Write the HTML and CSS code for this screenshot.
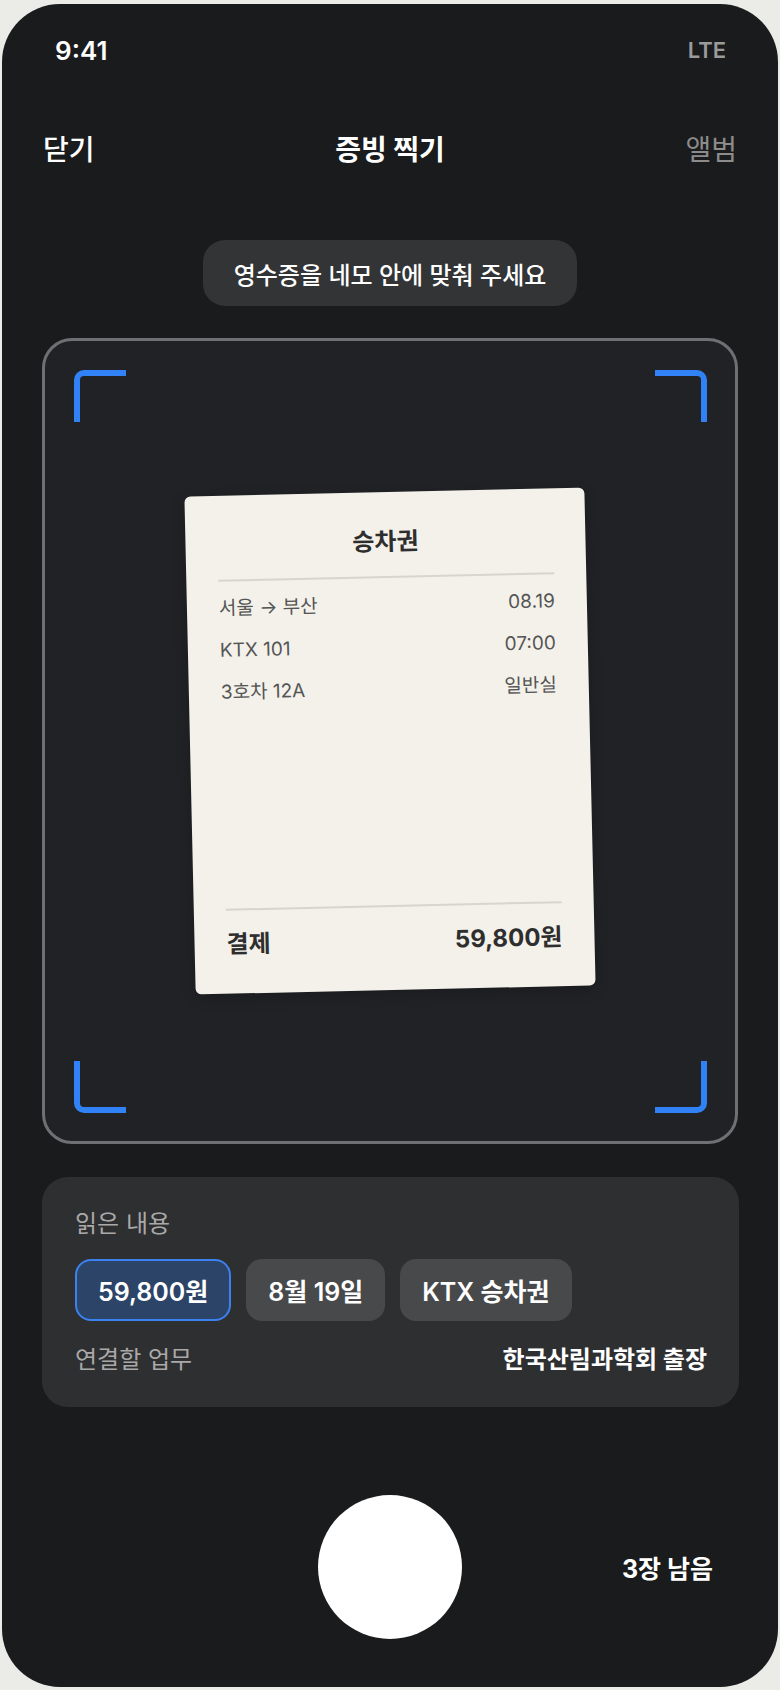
FILE: index.html
```html
<!DOCTYPE html>
<html lang="ko">
<head>
    <meta charset="UTF-8">
    <title>증빙 찍기</title>
    <link rel="stylesheet" href="styles.css">
</head>
<body>
    <div class="phone">
        <div class="status">
            <span class="time">9:41</span>
            <span class="net">LTE</span>
        </div>

        <div class="header">
            <span class="close">닫기</span>
            <span class="title">증빙 찍기</span>
            <span class="album">앨범</span>
        </div>

        <div class="toast">영수증을 네모 안에 맞춰 주세요</div>

        <div class="scan">
            <span class="corner tl"></span>
            <span class="corner tr"></span>
            <span class="corner bl"></span>
            <span class="corner br"></span>

            <div class="receipt">
                <div class="receipt-title">승차권</div>
                <div class="rule"></div>
                <div class="line"><span>서울 → 부산</span><span>08.19</span></div>
                <div class="line"><span>KTX 101</span><span>07:00</span></div>
                <div class="line"><span>3호차 12A</span><span>일반실</span></div>
                <div class="spacer"></div>
                <div class="rule"></div>
                <div class="total"><span>결제</span><span>59,800원</span></div>
            </div>
        </div>

        <div class="read-card">
            <div class="label">읽은 내용</div>
            <div class="chips">
                <span class="chip active">59,800원</span>
                <span class="chip">8월 19일</span>
                <span class="chip">KTX 승차권</span>
            </div>
            <div class="link-row">
                <span class="label">연결할 업무</span>
                <span class="task">한국산림과학회 출장</span>
            </div>
        </div>

        <div class="bottom">
            <div></div>
            <button class="shutter" aria-label="촬영"></button>
            <span class="left-count">3장 남음</span>
        </div>
    </div>
</body>
</html>
```

FILE: styles.css
```css
body {
    margin: 0;
    padding: 4px 2px 3px;
    background: #ebebe7;
    font-family: 'Inter', 'Noto Sans CJK KR', sans-serif;
    color: #fff;
}

.phone {
    height: 1683px;
    border-radius: 58px;
    background: #1a1b1d;
    display: flex;
    flex-direction: column;
    overflow: hidden;
}

.status {
    height: 92px;
    display: flex;
    justify-content: space-between;
    align-items: center;
    padding: 0 52px 0 53px;
}

.time {
    font-size: 26px;
    font-weight: 600;
}

.net {
    font-size: 22px;
    font-weight: 600;
    color: #9b9b9b;
}

.header {
    height: 104px;
    display: grid;
    grid-template-columns: 1fr auto 1fr;
    align-items: center;
    padding: 0 41px 0 41px;
    font-size: 28px;
}

.close {
    font-weight: 500;
}

.title {
    font-weight: 700;
}

.album {
    justify-self: end;
    color: #8c8c8c;
}

.toast {
    align-self: center;
    margin-top: 40px;
    height: 66px;
    padding: 0 31px;
    display: flex;
    align-items: center;
    background: #333436;
    border-radius: 22px;
    font-size: 24px;
    font-weight: 500;
}

.scan {
    position: relative;
    margin: 32px 40px 0 40px;
    height: 800px;
    border: 3px solid #707072;
    border-radius: 30px;
    background: #202226;
    display: flex;
    justify-content: center;
    align-items: center;
}

.corner {
    position: absolute;
    width: 46px;
    height: 46px;
    border: 0 solid #3182f6;
}

.tl {
    top: 29px;
    left: 29px;
    border-top-width: 6px;
    border-left-width: 6px;
    border-top-left-radius: 10px;
}

.tr {
    top: 29px;
    right: 28px;
    border-top-width: 6px;
    border-right-width: 6px;
    border-top-right-radius: 10px;
}

.bl {
    bottom: 28px;
    left: 29px;
    border-bottom-width: 6px;
    border-left-width: 6px;
    border-bottom-left-radius: 10px;
}

.br {
    bottom: 28px;
    right: 28px;
    border-bottom-width: 6px;
    border-right-width: 6px;
    border-bottom-right-radius: 10px;
}

.receipt {
    width: 400px;
    height: 498px;
    box-sizing: border-box;
    padding: 36px 32px 35px;
    background: #f3f1ea;
    border-radius: 6px;
    transform: rotate(-1.3deg);
    box-shadow: 0 4px 14px rgba(0,0,0,0.2);
    display: flex;
    flex-direction: column;
    color: #555;
}

.receipt-title {
    text-align: center;
    font-size: 24px;
    font-weight: 700;
    line-height: 28px;
    color: #2e2e2e;
}

.rule {
    height: 2px;
    background: #d8d5cc;
    margin-top: 20px;
}

.line {
    display: flex;
    justify-content: space-between;
    font-size: 19px;
    line-height: 42px;
}

.rule + .line {
    margin-top: 6px;
}

.spacer {
    flex: 1;
}

.total {
    display: flex;
    justify-content: space-between;
    margin-top: 20px;
    font-size: 24px;
    font-weight: 700;
    line-height: 28px;
    color: #2e2e2e;
}

.read-card {
    margin: 33px 39px 0 40px;
    padding: 31px 32px 31px 33px;
    background: #2e2f31;
    border-radius: 26px;
}

.label {
    font-size: 24px;
    line-height: 32px;
    color: #a9a9a9;
}

.chips {
    display: flex;
    gap: 15px;
    margin-top: 19px;
}

.chip {
    height: 62px;
    box-sizing: border-box;
    padding: 0 22px;
    display: flex;
    align-items: center;
    background: #48494b;
    border-radius: 16px;
    font-size: 25px;
    font-weight: 600;
}

.chip.active {
    border: 2px solid #3b82f0;
    background: #2c4468;
    padding: 0 21px;
}

.link-row {
    display: flex;
    justify-content: space-between;
    align-items: center;
    margin-top: 23px;
}

.task {
    font-size: 24px;
    font-weight: 700;
    line-height: 32px;
}

.bottom {
    margin-top: 88px;
    display: grid;
    grid-template-columns: 1fr auto 1fr;
    align-items: center;
}

.shutter {
    width: 144px;
    height: 144px;
    border-radius: 50%;
    border: none;
    background: #fff;
    padding: 0;
}

.left-count {
    justify-self: end;
    padding-right: 65px;
    font-size: 25px;
    font-weight: 700;
}
```
